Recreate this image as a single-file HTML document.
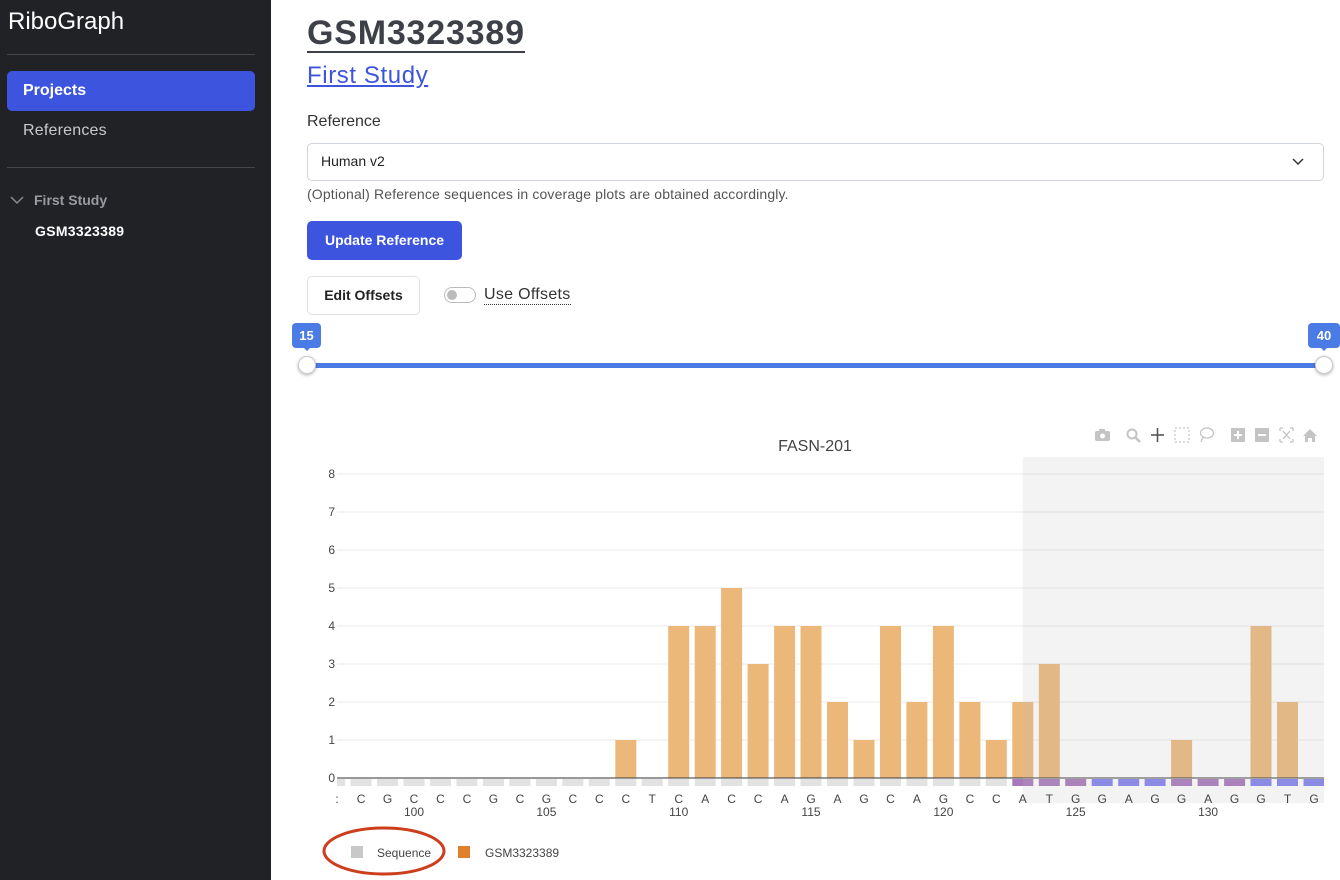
<!DOCTYPE html>
<html><head><meta charset="utf-8"><style>
*{box-sizing:border-box;margin:0;padding:0}
body{width:1340px;height:880px;overflow:hidden;font-family:"Liberation Sans",sans-serif;background:#fff;position:relative;color:#212529}
.side{position:absolute;left:0;top:0;width:271px;height:880px;background:#212226;color:#fff}
.a{position:absolute}
</style></head><body>
<div class="side">
  <div class="a" style="left:8px;top:8px;font-size:24px;color:#fff">RiboGraph</div>
  <div class="a" style="left:7px;top:54px;width:248px;height:1px;background:#45464b"></div>
  <div class="a" style="left:7px;top:71px;width:248px;height:40px;background:#3d55de;border-radius:5px"></div>
  <div class="a" style="left:23px;top:82px;font-size:16px;font-weight:bold">Projects</div>
  <div class="a" style="left:23px;top:122px;font-size:16px;color:#c8c9cc;letter-spacing:0.2px">References</div>
  <div class="a" style="left:7px;top:167px;width:248px;height:1px;background:#45464b"></div>
  <svg class="a" style="left:10px;top:195px" width="14" height="10"><path d="M1 2 L7 8 L13 2" fill="none" stroke="#8a8b8f" stroke-width="1.5"/></svg>
  <div class="a" style="left:34px;top:192px;font-size:14px;font-weight:bold;color:#9a9ba0">First Study</div>
  <div class="a" style="left:35px;top:223px;font-size:14px;font-weight:bold;color:#fff;letter-spacing:0.3px">GSM3323389</div>
</div>

<div class="a" style="left:307px;top:15px;font-size:34px;font-weight:bold;color:#3d4047;border-bottom:2px solid #3d4047;line-height:36px;letter-spacing:0.8px">GSM3323389</div>
<div class="a" style="left:307px;top:62px;font-size:24px;color:#3d55de;text-decoration:underline;line-height:28px;letter-spacing:0.6px">First Study</div>
<div class="a" style="left:307px;top:113px;font-size:16px;color:#333">Reference</div>
<div class="a" style="left:307px;top:143px;width:1017px;height:38px;border:1px solid #ced4da;border-radius:5px"></div>
<div class="a" style="left:321px;top:153px;font-size:14px;color:#222">Human v2</div>
<svg class="a" style="left:1292px;top:157px" width="12" height="9"><path d="M1 2 L6 7 L11 2" fill="none" stroke="#333" stroke-width="1.5"/></svg>
<div class="a" style="left:307px;top:186px;font-size:14px;color:#555;letter-spacing:0.15px">(Optional) Reference sequences in coverage plots are obtained accordingly.</div>
<div class="a" style="left:307px;top:221px;width:155px;height:39px;background:#3d55de;border-radius:5px;color:#fff;font-size:14px;font-weight:bold;text-align:center;line-height:39px">Update Reference</div>
<div class="a" style="left:307px;top:276px;width:113px;height:39px;border:1px solid #dee2e6;border-radius:5px;font-size:14px;font-weight:bold;text-align:center;line-height:37px;color:#222">Edit Offsets</div>
<div class="a" style="left:444px;top:287px;width:32px;height:16px;border:1px solid #bbb;border-radius:8px"></div>
<div class="a" style="left:447px;top:290px;width:10px;height:10px;border-radius:50%;background:#bbb"></div>
<div class="a" style="left:484px;top:286px;font-size:16px;color:#333;border-bottom:1px dotted #333;line-height:18px;letter-spacing:0.3px">Use Offsets</div>

<div class="a" style="left:307px;top:363px;width:1017px;height:5px;background:#4b7be5"></div>
<div class="a" style="left:292px;top:323px;width:29px;height:25px;background:#4b7be5;border-radius:4px;color:#fff;font-size:13px;font-weight:bold;text-align:center;line-height:25px">15</div>
<div class="a" style="left:302px;top:346px;width:0;height:0;border-left:5px solid transparent;border-right:5px solid transparent;border-top:5px solid #4b7be5"></div>
<div class="a" style="left:1308px;top:323px;width:32px;height:25px;background:#4b7be5;border-radius:4px;color:#fff;font-size:13px;font-weight:bold;text-align:center;line-height:25px">40</div>
<div class="a" style="left:1319px;top:346px;width:0;height:0;border-left:5px solid transparent;border-right:5px solid transparent;border-top:5px solid #4b7be5"></div>
<div class="a" style="left:298px;top:356px;width:18px;height:18px;border-radius:50%;background:#fff;border:1px solid #ccc;box-shadow:0 1px 3px rgba(0,0,0,.3)"></div>
<div class="a" style="left:1315px;top:356px;width:18px;height:18px;border-radius:50%;background:#fff;border:1px solid #ccc;box-shadow:0 1px 3px rgba(0,0,0,.3)"></div>

<svg class="a" style="left:0;top:0" width="1340" height="880" font-family="Liberation Sans, sans-serif">
<defs><clipPath id="c"><rect x="337" y="457" width="987" height="350"/></clipPath></defs>
<text x="815" y="451" font-size="16" fill="#444" text-anchor="middle">FASN-201</text>
<g stroke="#e8e8e8" stroke-width="1">
<line x1="337" x2="1324" y1="740" y2="740"/><line x1="337" x2="1324" y1="702" y2="702"/><line x1="337" x2="1324" y1="664" y2="664"/><line x1="337" x2="1324" y1="626" y2="626"/><line x1="337" x2="1324" y1="588" y2="588"/><line x1="337" x2="1324" y1="550" y2="550"/><line x1="337" x2="1324" y1="512" y2="512"/><line x1="337" x2="1324" y1="474" y2="474"/>
</g>
<g font-size="12" fill="#444" text-anchor="end">
<text x="335" y="782">0</text><text x="335" y="744">1</text><text x="335" y="706">2</text><text x="335" y="668">3</text><text x="335" y="630">4</text><text x="335" y="592">5</text><text x="335" y="554">6</text><text x="335" y="516">7</text><text x="335" y="478">8</text>
</g>
<g clip-path="url(#c)">
<g fill="#e2e2e2">
<rect x="324.1" y="779" width="21" height="7"/><rect x="350.6" y="779" width="21" height="7"/><rect x="377" y="779" width="21" height="7"/><rect x="403.5" y="779" width="21" height="7"/><rect x="430" y="779" width="21" height="7"/><rect x="456.4" y="779" width="21" height="7"/><rect x="482.9" y="779" width="21" height="7"/><rect x="509.4" y="779" width="21" height="7"/><rect x="535.9" y="779" width="21" height="7"/><rect x="562.3" y="779" width="21" height="7"/><rect x="588.8" y="779" width="21" height="7"/><rect x="615.3" y="779" width="21" height="7"/><rect x="641.7" y="779" width="21" height="7"/><rect x="668.2" y="779" width="21" height="7"/><rect x="694.7" y="779" width="21" height="7"/><rect x="721.1" y="779" width="21" height="7"/><rect x="747.6" y="779" width="21" height="7"/><rect x="774.1" y="779" width="21" height="7"/><rect x="800.5" y="779" width="21" height="7"/><rect x="827" y="779" width="21" height="7"/><rect x="853.5" y="779" width="21" height="7"/><rect x="880" y="779" width="21" height="7"/><rect x="906.4" y="779" width="21" height="7"/><rect x="932.9" y="779" width="21" height="7"/><rect x="959.4" y="779" width="21" height="7"/><rect x="985.8" y="779" width="21" height="7"/>
</g>
<g fill="#a877bb">
<rect x="1012.3" y="779" width="21" height="7"/><rect x="1038.8" y="779" width="21" height="7"/><rect x="1065.2" y="779" width="21" height="7"/><rect x="1171.1" y="779" width="21" height="7"/><rect x="1197.6" y="779" width="21" height="7"/><rect x="1224.1" y="779" width="21" height="7"/>
</g>
<g fill="#8080f0">
<rect x="1091.7" y="779" width="21" height="7"/><rect x="1118.2" y="779" width="21" height="7"/><rect x="1144.6" y="779" width="21" height="7"/><rect x="1250.5" y="779" width="21" height="7"/><rect x="1277" y="779" width="21" height="7"/><rect x="1303.5" y="779" width="21" height="7"/>
</g>
<g fill="#ebb87a">
<rect x="615.3" y="740" width="21" height="38"/><rect x="668.2" y="626" width="21" height="152"/><rect x="694.7" y="626" width="21" height="152"/><rect x="721.1" y="588" width="21" height="190"/><rect x="747.6" y="664" width="21" height="114"/><rect x="774.1" y="626" width="21" height="152"/><rect x="800.5" y="626" width="21" height="152"/><rect x="827" y="702" width="21" height="76"/><rect x="853.5" y="740" width="21" height="38"/><rect x="880" y="626" width="21" height="152"/><rect x="906.4" y="702" width="21" height="76"/><rect x="932.9" y="626" width="21" height="152"/><rect x="959.4" y="702" width="21" height="76"/><rect x="985.8" y="740" width="21" height="38"/><rect x="1012.3" y="702" width="21" height="76"/><rect x="1038.8" y="664" width="21" height="114"/><rect x="1171.1" y="740" width="21" height="38"/><rect x="1250.5" y="626" width="21" height="152"/><rect x="1277" y="702" width="21" height="76"/>
</g>
<line x1="337" x2="1324" y1="778" y2="778" stroke="#333" stroke-width="1"/>
<rect x="1022.7" y="457" width="302" height="346" fill="rgba(190,190,190,0.18)"/>
</g>
<g font-size="12" fill="#444" text-anchor="middle">
<text x="337" y="803">:</text><text x="361.1" y="803">C</text><text x="387.5" y="803">G</text><text x="414" y="803">C</text><text x="440.5" y="803">C</text><text x="466.9" y="803">C</text><text x="493.4" y="803">G</text><text x="519.9" y="803">C</text><text x="546.4" y="803">G</text><text x="572.8" y="803">C</text><text x="599.3" y="803">C</text><text x="625.8" y="803">C</text><text x="652.2" y="803">T</text><text x="678.7" y="803">C</text><text x="705.2" y="803">A</text><text x="731.6" y="803">C</text><text x="758.1" y="803">C</text><text x="784.6" y="803">A</text><text x="811" y="803">G</text><text x="837.5" y="803">A</text><text x="864" y="803">G</text><text x="890.5" y="803">C</text><text x="916.9" y="803">A</text><text x="943.4" y="803">G</text><text x="969.9" y="803">C</text><text x="996.3" y="803">C</text><text x="1022.8" y="803">A</text><text x="1049.3" y="803">T</text><text x="1075.7" y="803">G</text><text x="1102.2" y="803">G</text><text x="1128.7" y="803">A</text><text x="1155.1" y="803">G</text><text x="1181.6" y="803">G</text><text x="1208.1" y="803">A</text><text x="1234.6" y="803">G</text><text x="1261" y="803">G</text><text x="1287.5" y="803">T</text><text x="1314" y="803">G</text>
<text x="414" y="816">100</text><text x="546.4" y="816">105</text><text x="678.7" y="816">110</text><text x="811" y="816">115</text><text x="943.4" y="816">120</text><text x="1075.7" y="816">125</text><text x="1208.1" y="816">130</text>
</g>
<rect x="351" y="846" width="12" height="12" fill="#c8c8c8"/>
<text x="377" y="857" font-size="12" fill="#444">Sequence</text>
<rect x="458" y="846" width="12" height="12" fill="#e0802a"/>
<text x="485" y="857" font-size="12" fill="#444">GSM3323389</text>
<ellipse cx="384" cy="851" rx="60" ry="23" fill="none" stroke="#cc3e1c" stroke-width="3"/>
<g fill="#c4c4c4" stroke="#c4c4c4">
<rect x="1095" y="431" width="15" height="10" rx="2" stroke="none"/><rect x="1099" y="429" width="6" height="3" stroke="none"/><circle cx="1102.5" cy="436" r="2.5" fill="#fff" stroke="none"/>
<circle cx="1132" cy="434" r="4.5" fill="none" stroke-width="2"/><line x1="1135" y1="437" x2="1140" y2="442" stroke-width="2.5"/>
<g stroke="#555" stroke-width="1.6"><line x1="1151" y1="435" x2="1164" y2="435"/><line x1="1157.5" y1="428" x2="1157.5" y2="442"/></g>
<rect x="1175" y="428" width="14" height="14" fill="none" stroke-width="1.2" stroke-dasharray="2,2"/>
<ellipse cx="1207" cy="433" rx="6.5" ry="5" fill="none" stroke-width="1.3"/><path d="M1203 437 L1201 442" fill="none" stroke-width="1.3"/>
<rect x="1231" y="428" width="14" height="14" stroke="none"/><rect x="1255" y="428" width="14" height="14" stroke="none"/>
<path d="M1280 428 h3 M1280 428 v3 M1293 428 h-3 M1293 428 v3 M1280 442 h3 M1280 442 v-3 M1293 442 h-3 M1293 442 v-3 M1283 431 L1290 439 M1290 431 L1283 439" fill="none" stroke-width="1.3"/>
<path d="M1303 436 L1310 429 L1317 436 L1315 436 L1315 442 L1312 442 L1312 438 L1308 438 L1308 442 L1305 442 L1305 436 Z" stroke="none"/>
</g>
<g stroke="#fff" stroke-width="2"><line x1="1234" y1="435" x2="1242" y2="435"/><line x1="1238" y1="431" x2="1238" y2="439"/><line x1="1258" y1="435" x2="1266" y2="435"/></g>
</svg>
</body></html>
